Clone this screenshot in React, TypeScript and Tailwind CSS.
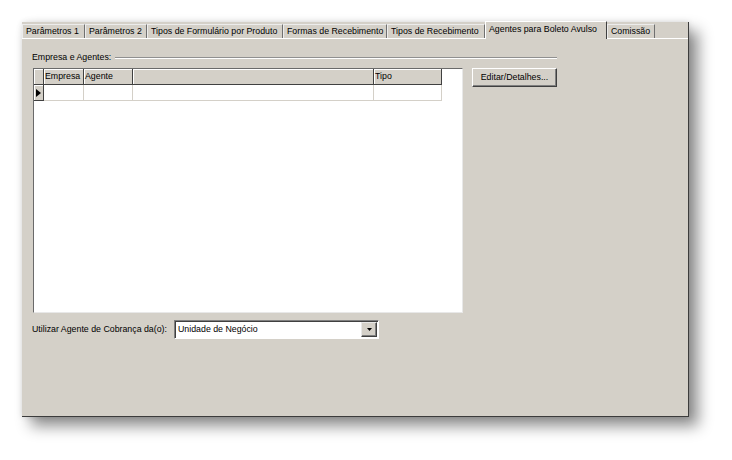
import React from "react";

const tabs = [
  { label: "Parâmetros 1", w: 63 },
  { label: "Parâmetros 2", w: 62 },
  { label: "Tipos de Formulário por Produto", w: 136 },
  { label: "Formas de Recebimento", w: 104 },
  { label: "Tipos de Recebimento", w: 98 },
  { label: "Agentes para Boleto Avulso", w: 122, active: true },
  { label: "Comissão", w: 48 },
];

const cols = [
  { label: "Empresa", w: 40 },
  { label: "Agente", w: 49 },
  { label: "", w: 241 },
  { label: "Tipo", w: 68 },
];

export default function App() {
  return (
    <div
      className="w-[732px] h-[460px] bg-white pt-[22px] pl-[22px] text-[8.8px] leading-[11px] text-black"
      style={{ fontFamily: '"Liberation Sans", Arial, sans-serif' }}
    >
      <div className="w-[667px] h-[395px] bg-[#d4d0c8] flex flex-col border-r border-b border-[#3c3c3c] shadow-[9px_9px_14px_rgba(0,0,0,0.45),0_0_6px_rgba(0,0,0,0.12)]">
        {/* tab row */}
        <div className="h-[16px] flex items-end relative z-10">
          {tabs.map((t) =>
            t.active ? (
              <div
                key={t.label}
                style={{ width: t.w }}
                className="h-[18px] -mb-[1px] bg-[#d4d0c8] border-t border-l border-white border-r border-r-[#404040] pl-[3px] pt-[2px] whitespace-nowrap"
              >
                {t.label}
              </div>
            ) : (
              <div
                key={t.label}
                style={{ width: t.w }}
                className="h-[14px] border-t border-l border-[#ececec] border-r border-r-[#707070] pl-[3px] pt-[1px] whitespace-nowrap"
              >
                {t.label}
              </div>
            )
          )}
        </div>
        {/* body */}
        <div className="flex-1 border-t border-white pl-[10px] pt-[13px]">
          <div className="w-[525px] h-[11px] flex items-center">
            <span className="whitespace-nowrap">Empresa e Agentes:</span>
            <div className="flex-1 ml-[4px] h-[2px] border-t border-[#909090] border-b border-b-white" />
          </div>
          <div className="mt-[5px] flex items-start">
            {/* grid */}
            <div className="ml-[1px] w-[430px] h-[245px] bg-white border-l border-t border-[#6a6a6a] border-r border-b border-r-[#e8e8e8] border-b-[#e8e8e8]">
              <div className="flex h-[16px]">
                <div className="w-[10px] h-full bg-[#d4d0c8] border-r border-b border-[#404040] shadow-[inset_1px_1px_0_#fff]" />
                {cols.map((c, i) => (
                  <div
                    key={i}
                    style={{ width: c.w }}
                    className="h-full bg-[#d4d0c8] border-r border-b border-[#404040] shadow-[inset_1px_1px_0_#fff] pl-[1px] pt-[2px] whitespace-nowrap"
                  >
                    {c.label}
                  </div>
                ))}
              </div>
              <div className="flex h-[16px]">
                <div className="w-[10px] h-full bg-[#d4d0c8] border-r border-b border-[#404040] shadow-[inset_1px_1px_0_#fff] flex items-center justify-center">
                  <svg width="5" height="8" viewBox="0 0 5 8">
                    <path d="M0 0 L5 4 L0 8 Z" fill="#000" />
                  </svg>
                </div>
                {cols.map((c, i) => (
                  <div
                    key={i}
                    style={{ width: c.w }}
                    className="h-full bg-white border-r border-b border-[#d4d0c8]"
                  />
                ))}
              </div>
            </div>
            {/* button */}
            <div className="ml-[9px] w-[85px] h-[19px] flex items-center justify-center border-t border-l border-white border-r border-b border-r-[#404040] border-b-[#404040] shadow-[inset_-1px_-1px_0_#808080] whitespace-nowrap">
              Editar/Detalhes...
            </div>
          </div>
          {/* combo row */}
          <div className="mt-[7px] flex items-center">
            <span className="w-[142px] whitespace-nowrap">Utilizar Agente de Cobrança da(o):</span>
            <div className="w-[205px] h-[19px] flex border-t border-l border-[#808080] border-r border-b border-r-white border-b-white bg-white shadow-[inset_1px_1px_0_#404040]">
              <div className="flex-1 pl-[3px] pt-[3px] whitespace-nowrap">Unidade de Negócio</div>
              <div className="w-[16px] h-[15px] mt-[1px] mr-[1px] bg-[#d4d0c8] border-t border-l border-[#e8e8e8] border-r border-b border-r-[#404040] border-b-[#404040] shadow-[inset_-1px_-1px_0_#808080] flex items-center justify-center">
                <svg width="5" height="3" viewBox="0 0 5 3">
                  <path d="M0 0 L5 0 L2.5 3 Z" fill="#000" />
                </svg>
              </div>
            </div>
          </div>
        </div>
      </div>
    </div>
  );
}
